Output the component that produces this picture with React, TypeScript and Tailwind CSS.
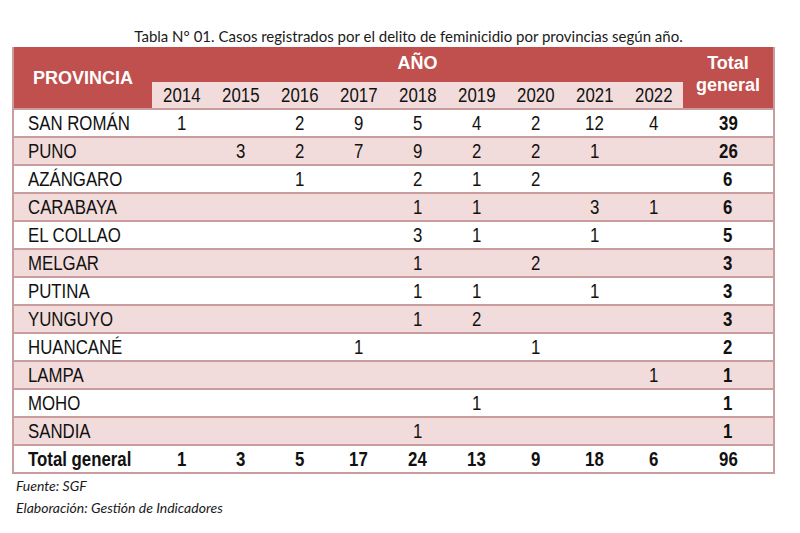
import React from "react";

const years = ["2014", "2015", "2016", "2017", "2018", "2019", "2020", "2021", "2022"];

const rows: [string, (number | null)[], number][] = [
  ["SAN ROMÁN", [1, null, 2, 9, 5, 4, 2, 12, 4], 39],
  ["PUNO", [null, 3, 2, 7, 9, 2, 2, 1, null], 26],
  ["AZÁNGARO", [null, null, 1, null, 2, 1, 2, null, null], 6],
  ["CARABAYA", [null, null, null, null, 1, 1, null, 3, 1], 6],
  ["EL COLLAO", [null, null, null, null, 3, 1, null, 1, null], 5],
  ["MELGAR", [null, null, null, null, 1, null, 2, null, null], 3],
  ["PUTINA", [null, null, null, null, 1, 1, null, 1, null], 3],
  ["YUNGUYO", [null, null, null, null, 1, 2, null, null, null], 3],
  ["HUANCANÉ", [null, null, null, 1, null, null, 1, null, null], 2],
  ["LAMPA", [null, null, null, null, null, null, null, null, 1], 1],
  ["MOHO", [null, null, null, null, null, 1, null, null, null], 1],
  ["SANDIA", [null, null, null, null, 1, null, null, null, null], 1],
];

const totals = [1, 3, 5, 17, 24, 13, 9, 18, 6];

const arial = "font-['Liberation_Sans',Arial,sans-serif]";
const gridCols = "grid grid-cols-[138px_repeat(9,59px)_90px]";

function N({ children, left = false }: { children: React.ReactNode; left?: boolean }) {
  return (
    <span className={`inline-block whitespace-nowrap scale-x-[0.82] ${left ? "origin-left" : "origin-center"}`}>
      {children}
    </span>
  );
}

export default function App() {
  return (
    <div className="w-[800px] h-[533px] bg-white relative overflow-hidden">
      <div className="pt-[27px] h-[47px] text-center text-[15px] leading-[18px] text-[#1a1a1a] font-['Lato',sans-serif] pl-[17px]">
        Tabla N° 01. Casos registrados por el delito de feminicidio por provincias según año.
      </div>
      <div className="ml-[12px] w-[759px] border-x-2 border-b-2 border-[#c99d9d] box-content">
        {/* Header */}
        <div className={`${gridCols} grid-rows-[35px_26px] bg-[#c0504d] text-white ${arial} font-bold`}>
          <div className="row-span-2 flex items-center justify-center text-[18px] pt-[1px]">PROVINCIA</div>
          <div className="col-span-9 flex items-center justify-center text-[18px] pb-[3px]">AÑO</div>
          <div className="row-span-2 flex flex-col items-center justify-center text-[18px] leading-[22px] pb-[8px]">
            <span>Total</span>
            <span>general</span>
          </div>
          {years.map((y) => (
            <div key={y} className="bg-[#f2dcdb] text-[#111] font-normal text-[20.5px] leading-none flex items-center justify-center">
              <N>{y}</N>
            </div>
          ))}
        </div>
        {rows.map(([name, vals, total], i) => (
          <div
            key={name}
            className={`${gridCols} h-[28px] border-t-2 border-[#c99d9d] ${i % 2 === 1 ? "bg-[#f2dcdb]" : "bg-white"} ${arial} text-[20.5px] text-[#111] leading-none`}
          >
            <div className="flex items-center pl-[14px]">
              <N left>{name}</N>
            </div>
            {vals.map((v, j) => (
              <div key={j} className="flex items-center justify-center">
                {v !== null ? <N>{v}</N> : null}
              </div>
            ))}
            <div className="flex items-center justify-center font-bold">
              <N>{total}</N>
            </div>
          </div>
        ))}
        <div className={`${gridCols} h-[28px] border-t-2 border-[#c99d9d] bg-white ${arial} text-[20.5px] text-[#111] font-bold leading-none`}>
          <div className="flex items-center pl-[14px]">
            <N left>Total general</N>
          </div>
          {totals.map((v, j) => (
            <div key={j} className="flex items-center justify-center">
              <N>{v}</N>
            </div>
          ))}
          <div className="flex items-center justify-center">
            <N>96</N>
          </div>
        </div>
      </div>
      <div className="pl-[16px] pt-[1px] font-['Lato',sans-serif] italic text-[14px] leading-[22px] text-[#1a1a1a]">
        <div>Fuente: SGF</div>
        <div>Elaboración: Gestión de Indicadores</div>
      </div>
    </div>
  );
}
